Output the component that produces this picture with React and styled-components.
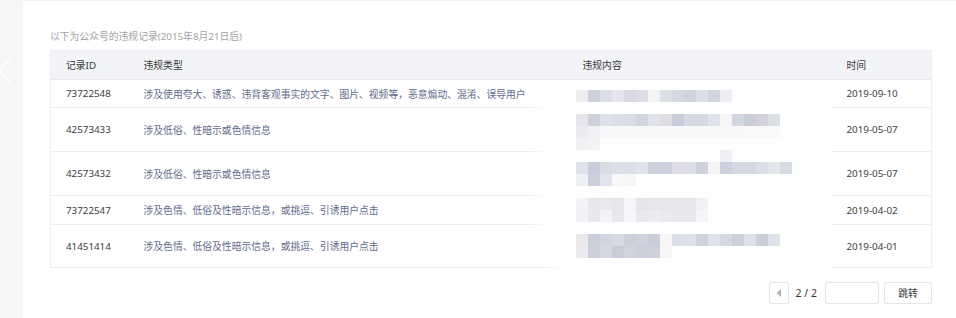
import React from 'react'
import styled, { createGlobalStyle } from 'styled-components'

const GlobalStyle = createGlobalStyle`
  html, body { margin: 0; padding: 0; background: #f5f6f8; }
  body { font-family: "Noto Sans", "Noto Sans CJK SC", sans-serif; }
`

const records = [
  { id: '73722548', type: '涉及使用夸大、诱惑、违背客观事实的文字、图片、视频等，恶意煽动、混淆、误导用户', time: '2019-09-10', h: 28 },
  { id: '42573433', type: '涉及低俗、性暗示或色情信息', time: '2019-05-07', h: 44 },
  { id: '42573432', type: '涉及低俗、性暗示或色情信息', time: '2019-05-07', h: 44 },
  { id: '73722547', type: '涉及色情、低俗及性暗示信息，或挑逗、引诱用户点击', time: '2019-04-02', h: 29 },
  { id: '41451414', type: '涉及色情、低俗及性暗示信息，或挑逗、引诱用户点击', time: '2019-04-01', h: 43 },
]

// blurred content, one string per 12px line, colours by block
const mosaic = [
  'ececf1 cdd0dc dcdfe7 e6e7ee d8d9e2 dcdde6 f3f3f6 dcdfe8 d6d8e2 d0d3de dcdfe8 d3d5e0 eeeff3',
  '',
  'e6e6ec cfd0dc dfe1e9 dbdee8 dadde7 d2d4df e0e3ec dcdde3 c9cdd9 d6d9e4 d6d9e4 e1e3ea f6f5f7 d2d7e1 c8ced9 d3d1dc dcdee6',
  'ebebf0 f0f1f5 f8f8fa f8f8fa f8f8fa f8f8fa f8f8fa f8f8fa f8f8fa f8f8fa f8f8fa f8f8fa f8f8fa f8f8fa f9f9fb f9f9fb f9f9fb',
  'f1f1f4 f3f3f6',
  '- - - - - - - - - - - - eff0f5',
  'e1e2e9 c8cddb dadce4 dcdfe8 dcdee8 e1e4ec ccd0dc cdd1de dedfe6 dcdde6 ced1dd f2f3f6 cdd1dd d6d8e1 d6d8e1 dcdfe8 e6e7ed d6dbe6',
  'eff0f4 ccd0dc e0e3ed f7f7f9 f5f6f8',
  '',
  'f3f3f6 e7e8ee e8e9ee e6e7ed f5f5f7 e4e4ea e6e6ec e6e6ec e6e6ec e6e6ec f1f1f5',
  'f2f2f5 e7e8ee f3f3f6 e8e9ee f6f6f8 e8e9ee ececf0 eae9ee e9e8ee e8e9ee f5f5f8',
  '',
  'ebe8ec cbcfdc d2d5e0 d8dae3 cdd0dc d0d2dc c8cedb f6f6f8 dcdfe8 dfe0e7 ced2de e1e2ea d6d8e2 cdd0dc dfe1e9 ccced9 dee1ea',
  'ebeaef ccd0dc d6d8e1 c9cddb d0d3de ccd0dc ccd1dd f5f5f7',
]

const App = () => {
  return (
    <>
      <GlobalStyle />
      <Page>
        <SideStrip>
          <BackArrow width="12" height="30" viewBox="0 0 12 30">
            <path d="M11 1 L-1 14 L11 28" fill="none" stroke="#fff" strokeWidth="1.4" />
          </BackArrow>
        </SideStrip>
        <Panel>
          <Caption>以下为公众号的违规记录(2015年8月21日后)</Caption>
          <TableWrap>
            <Table>
              <colgroup>
                <col style={{ width: 78 }} />
                <col style={{ width: 439 }} />
                <col style={{ width: 264 }} />
                <col />
              </colgroup>
              <thead>
                <tr>
                  <Th>记录ID</Th>
                  <Th>违规类型</Th>
                  <Th>违规内容</Th>
                  <Th>时间</Th>
                </tr>
              </thead>
              <tbody>
                {records.map((r) => (
                  <tr key={r.id}>
                    <Td $h={r.h}>{r.id}</Td>
                    <Td $h={r.h} $type>{r.type}</Td>
                    <Td $h={r.h} $hidden></Td>
                    <Td $h={r.h}>{r.time}</Td>
                  </tr>
                ))}
              </tbody>
            </Table>
            <Fog />
            <Mosaic>
              {mosaic.map((line, i) => (
                <MosaicLine key={i}>
                  {line.split(' ').filter(Boolean).map((c, j) => (
                    <Block key={j} $c={c === '-' ? 'transparent' : '#' + c} />
                  ))}
                </MosaicLine>
              ))}
            </Mosaic>
          </TableWrap>
          <Pager>
            <PrevBtn>
              <svg width="6" height="8" viewBox="0 0 6 8">
                <path d="M5 0 L0.5 4 L5 8 Z" fill="#b5b5b5" />
              </svg>
            </PrevBtn>
            <PageNum>2 / 2</PageNum>
            <PageInput />
            <JumpBtn>跳转</JumpBtn>
          </Pager>
        </Panel>
      </Page>
    </>
  )
}

export default App

const Page = styled.div`
  display: flex;
  min-height: 318px;
  overflow: hidden;
`

const SideStrip = styled.div`
  position: relative;
  width: 23px;
  flex-shrink: 0;
  background: #f5f6f8;
`

const BackArrow = styled.svg`
  position: absolute;
  left: 0;
  top: 56px;
`

const Panel = styled.div`
  flex: 1;
  background: #fff;
  border-top: 1px solid #f1f2f4;
  padding: 28px 24px 0 27px;
`

const Caption = styled.div`
  font-size: 9.8px;
  line-height: 15px;
  color: #a3a3a3;
  margin-bottom: 6px;
`

const TableWrap = styled.div`
  position: relative;
`

const Table = styled.table`
  width: 100%;
  border-collapse: collapse;
  table-layout: fixed;
  border: 1px solid #eceef1;
  font-size: 9.8px;
`

const Th = styled.th`
  height: 29px;
  padding: 0 0 0 15px;
  text-align: left;
  font-weight: normal;
  color: #3a3a3a;
  background: #f3f4f7;
  border-bottom: 1px solid #e6e8ec;
  box-sizing: border-box;
`

const Td = styled.td`
  height: ${(p) => p.$h}px;
  padding: 0 0 0 15px;
  box-sizing: border-box;
  color: ${(p) => (p.$type ? '#626a8c' : '#3c3c3c')};
  border-bottom: 1px solid ${(p) => (p.$hidden ? '#fbfbfc' : '#eceef1')};
  white-space: nowrap;
  vertical-align: middle;
`

const Fog = styled.div`
  position: absolute;
  left: 490px;
  top: 36px;
  width: 282px;
  height: 184px;
  background: #fefefe;
  border-radius: 24px;
  filter: blur(6px);
`

const Mosaic = styled.div`
  position: absolute;
  left: 526px;
  top: 40px;
  display: flex;
  flex-direction: column;
`

const MosaicLine = styled.div`
  display: flex;
  height: 12px;
`

const Block = styled.span`
  width: 12px;
  height: 12px;
  background: ${(p) => p.$c};
`

const Pager = styled.div`
  display: flex;
  justify-content: flex-end;
  align-items: center;
  margin-top: 14px;
  font-size: 9.8px;
  color: #333;
`

const PrevBtn = styled.button`
  width: 20px;
  height: 22px;
  padding: 0;
  display: grid;
  place-items: center;
  background: #fff;
  border: 1px solid #e4e6ea;
  border-radius: 2px;
`

const PageNum = styled.span`
  margin: 0 8px 0 7px;
  font-size: 10.5px;
`

const PageInput = styled.input`
  width: 54px;
  height: 22px;
  box-sizing: border-box;
  border: 1px solid #e4e6ea;
  border-radius: 2px;
  margin-right: 5px;
`

const JumpBtn = styled.button`
  width: 48px;
  height: 22px;
  background: #fff;
  border: 1px solid #e4e6ea;
  border-radius: 2px;
  font-family: "Noto Sans CJK SC", sans-serif;
  font-size: 9.8px;
  color: #353535;
`
